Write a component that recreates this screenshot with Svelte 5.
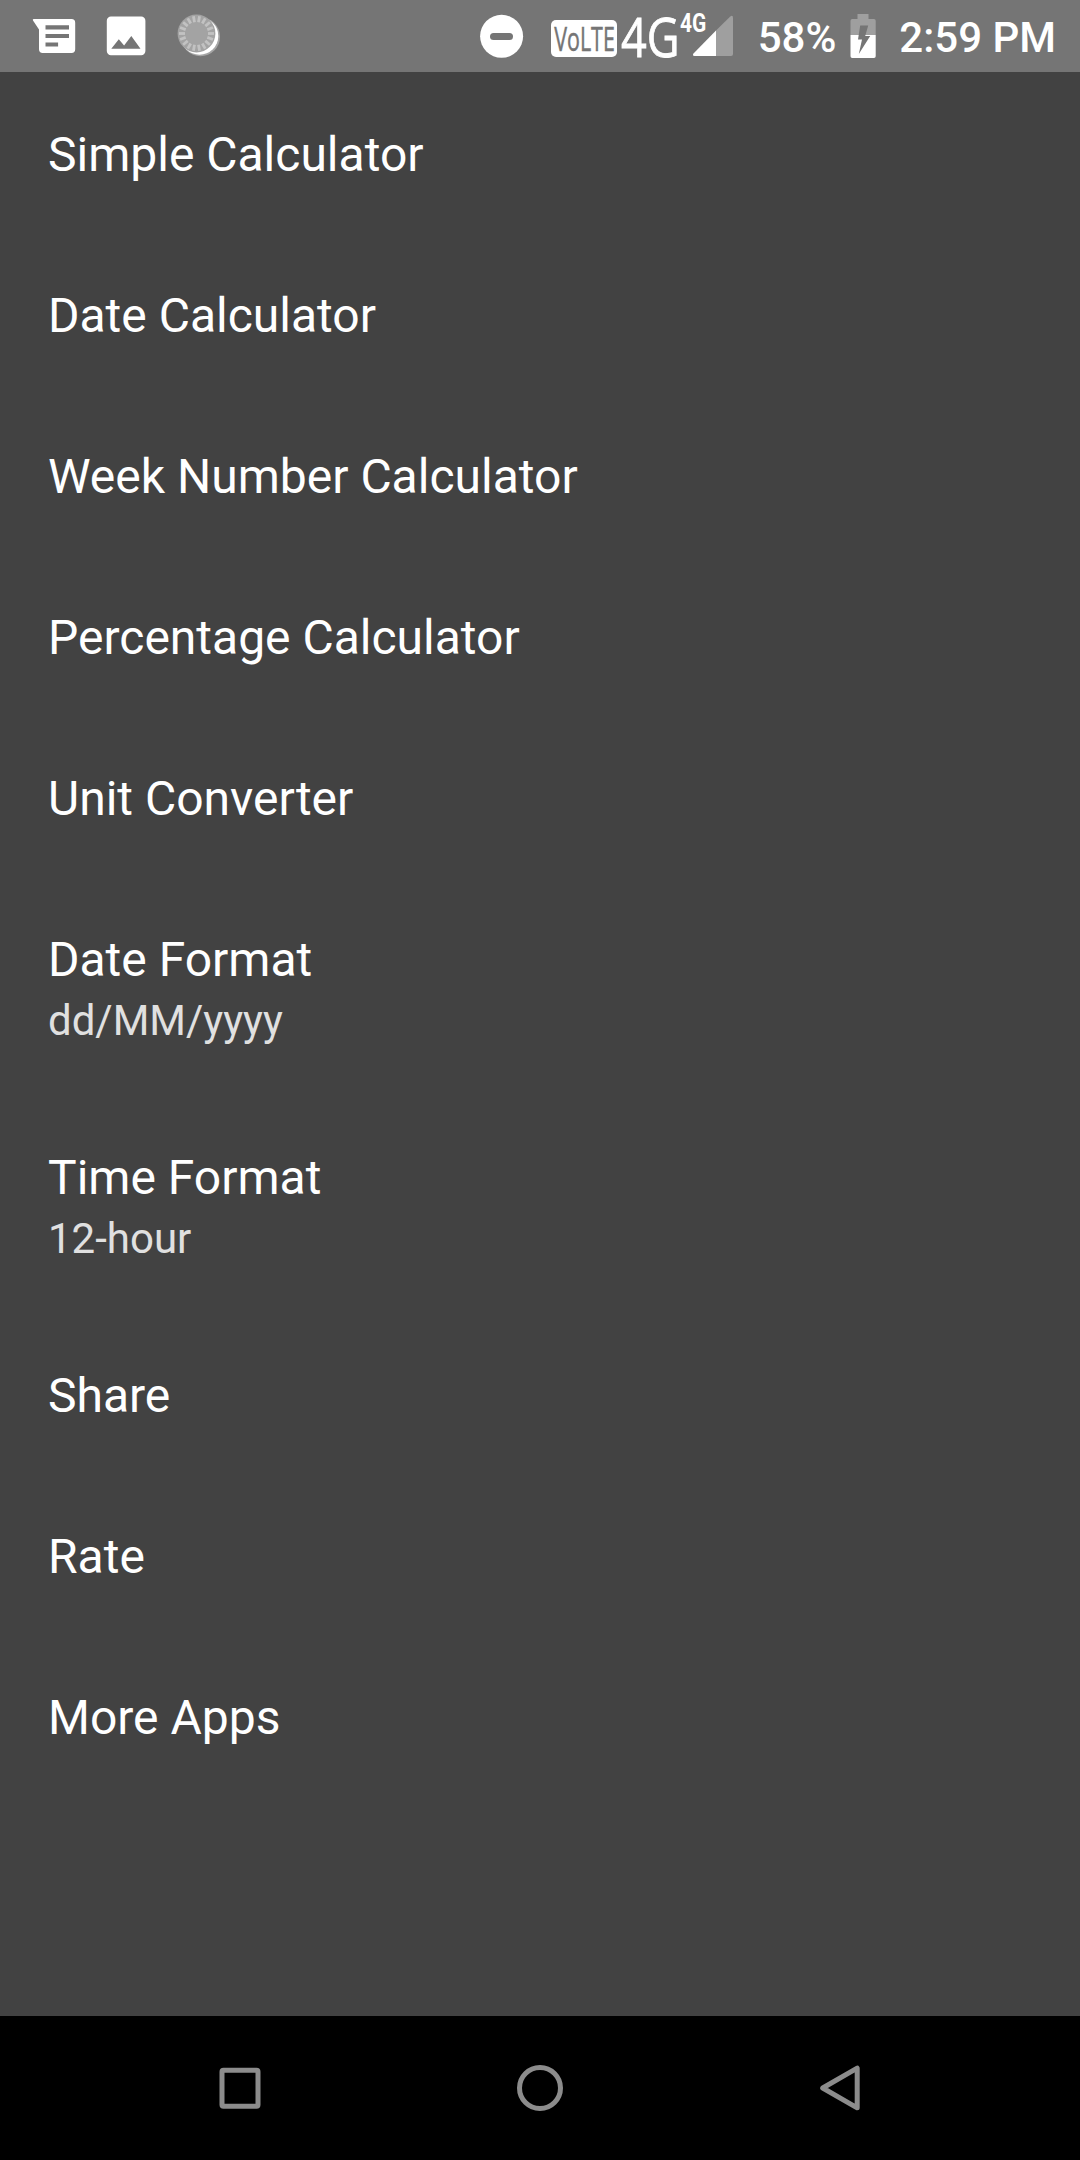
<script lang="ts">
	interface Item {
		title: string;
		summary?: string;
	}

	const items: Item[] = [
		{ title: 'Simple Calculator' },
		{ title: 'Date Calculator' },
		{ title: 'Week Number Calculator' },
		{ title: 'Percentage Calculator' },
		{ title: 'Unit Converter' },
		{ title: 'Date Format', summary: 'dd/MM/yyyy' },
		{ title: 'Time Format', summary: '12-hour' },
		{ title: 'Share' },
		{ title: 'Rate' },
		{ title: 'More Apps' }
	];

	// angles of the notches around the spinner badge
	const ticks = Array.from({ length: 18 }, (_, i) => i * 20 + 10);
</script>

<div class="screen">
	<header class="status-bar">
		<div class="notifications">
			<svg width="44" height="72" viewBox="32 0 44 72" aria-hidden="true">
				<path
					fill="#fff"
					fill-rule="evenodd"
					d="M33.6 19H71.5a3.7 3.7 0 0 1 3.7 3.7V49.3a3.7 3.7 0 0 1-3.7 3.7H42.7a3.7 3.7 0 0 1-3.7-3.7V29.5L33 20.6Q32.3 19 33.6 19zM45.5 25.3v4.2H69v-4.2zM45.5 34v4.1H69V34zM45.5 42.4v4.2h12.6v-4.2z"
				/>
			</svg>
			<svg width="40" height="72" viewBox="106 0 40 72" aria-hidden="true">
				<path
					fill="#fff"
					fill-rule="evenodd"
					d="M111 16.5h30.2a4.2 4.2 0 0 1 4.2 4.2v30.4a4.2 4.2 0 0 1-4.2 4.2H111a4.2 4.2 0 0 1-4.2-4.2V20.7a4.2 4.2 0 0 1 4.2-4.2zM111.3 48.8h29.2l-9.2-12.8-7.2 9.5-5.3-6.3z"
				/>
			</svg>
			<svg width="46" height="72" viewBox="175 0 46 72" aria-hidden="true">
				<circle cx="199.5" cy="36.8" r="19.5" fill="#a5a5a5" />
				<circle cx="198.5" cy="36" r="18.8" fill="#fff" />
				<circle cx="195.5" cy="33.5" r="18.9" fill="#a3a3a3" />
				{#each ticks as angle}
					<path
						d="M195.5 16v6"
						stroke="#c2c2c2"
						stroke-width="2.8"
						transform="rotate({angle} 195.5 33.5)"
					/>
				{/each}
			</svg>
		</div>

		<div class="system">
			<svg width="44" height="72" viewBox="480 0 44 72" aria-hidden="true">
				<circle cx="501.6" cy="36.3" r="21.5" fill="#fff" />
				<path d="M493.5 36.5h16" stroke="#757575" stroke-width="7" stroke-linecap="round" />
			</svg>
			<svg class="network" width="186" height="72" viewBox="549 0 186 72">
				<rect x="551" y="20" width="66" height="37" rx="5" fill="#fff" />
				<text class="volte" transform="translate(554.2 51) scale(0.65 1)">VoLTE</text>
				<text class="lte" transform="translate(621 57) scale(0.82 1)">4G</text>
				<text class="lte-small" transform="translate(680 32.3) scale(0.84 1)">4G</text>
				<path d="M716 30.5L730 16.7Q733 14.5 733 18V54a2 2 0 0 1-2 2H716z" fill="#9f9f9f" />
				<path d="M716 30.5V56H694.5q-2.5-.5-1-2.5z" fill="#fff" />
			</svg>
			<span class="percent">58%</span>
			<svg class="battery" width="26" height="72" viewBox="850.5 0 26 72" aria-hidden="true">
				<path d="M858 14h11v5h5.5a1.7 1.7 0 0 1 1.7 1.7V35H851V20.7A1.7 1.7 0 0 1 852.7 19H858z" fill="#9f9f9f" />
				<path d="M851 35h25.2V56.3a1.7 1.7 0 0 1-1.7 1.7H852.7a1.7 1.7 0 0 1-1.7-1.7z" fill="#fff" />
				<path d="M860.7 25.5h8l-3 10.5h5L859.3 54l3.2-14.5h-4z" fill="#757575" />
			</svg>
			<span class="clock">2:59 PM</span>
		</div>
	</header>

	<main class="list">
		{#each items as item}
			<div class="item">
				<div class="title">{item.title}</div>
				{#if item.summary}
					<div class="summary">{item.summary}</div>
				{/if}
			</div>
		{/each}
	</main>

	<nav class="nav-bar">
		<svg width="60" height="60" viewBox="0 0 60 60" aria-label="Recent apps">
			<rect x="12" y="12.2" width="36" height="36" rx="1.5" />
		</svg>
		<svg width="60" height="60" viewBox="0 0 60 60" aria-label="Home">
			<circle cx="30" cy="30" r="20.5" />
		</svg>
		<svg width="60" height="60" viewBox="0 0 60 60" aria-label="Back">
			<path d="M47.2 10.2V49.8L12.7 30z" />
		</svg>
	</nav>
</div>

<style>
	:global(body) {
		margin: 0;
		background: #424242;
	}

	.screen {
		display: flex;
		flex-direction: column;
		width: 1080px;
		height: 2160px;
		overflow: hidden;
		background: #424242;
		color: #fff;
		font-family: Roboto, 'Liberation Sans', sans-serif;
	}

	.status-bar {
		display: flex;
		justify-content: space-between;
		height: 72px;
		padding: 0 24px 0 32px;
		background: #757575;
		box-sizing: border-box;
	}

	.notifications {
		display: flex;
		gap: 30px;
	}

	.system {
		display: flex;
		font-size: 42px;
		font-weight: 500;
		line-height: 75px;
		white-space: nowrap;
	}

	.network {
		margin-left: 25px;
		overflow: visible;
	}

	.volte {
		fill: #757575;
		stroke: #757575;
		stroke-width: 0.5;
		font-family: 'Open Sans', sans-serif;
		font-size: 33px;
		font-weight: 400;
	}

	.lte {
		fill: #fff;
		stroke: #fff;
		stroke-width: 0.8;
		font-family: 'Open Sans', sans-serif;
		font-size: 55px;
		font-weight: 400;
	}

	.lte-small {
		fill: #fff;
		font-size: 25px;
		font-weight: 700;
	}

	.percent {
		margin-left: 23px;
	}

	.battery {
		margin-left: 14px;
	}

	.clock {
		margin-left: 23px;
	}

	.list {
		flex: 1;
		padding-top: 2px;
	}

	.item {
		padding: 53px 48px 52px;
	}

	.title {
		font-size: 48px;
		line-height: 56px;
	}

	.summary {
		padding-top: 8px;
		color: #e0e0e0;
		font-size: 42px;
		line-height: 49px;
	}

	.nav-bar {
		display: flex;
		justify-content: center;
		align-items: center;
		gap: 240px;
		height: 144px;
		background: #000;
	}

	.nav-bar svg {
		fill: none;
		stroke: #8c8c8c;
		stroke-width: 5;
		stroke-linejoin: round;
	}
</style>
